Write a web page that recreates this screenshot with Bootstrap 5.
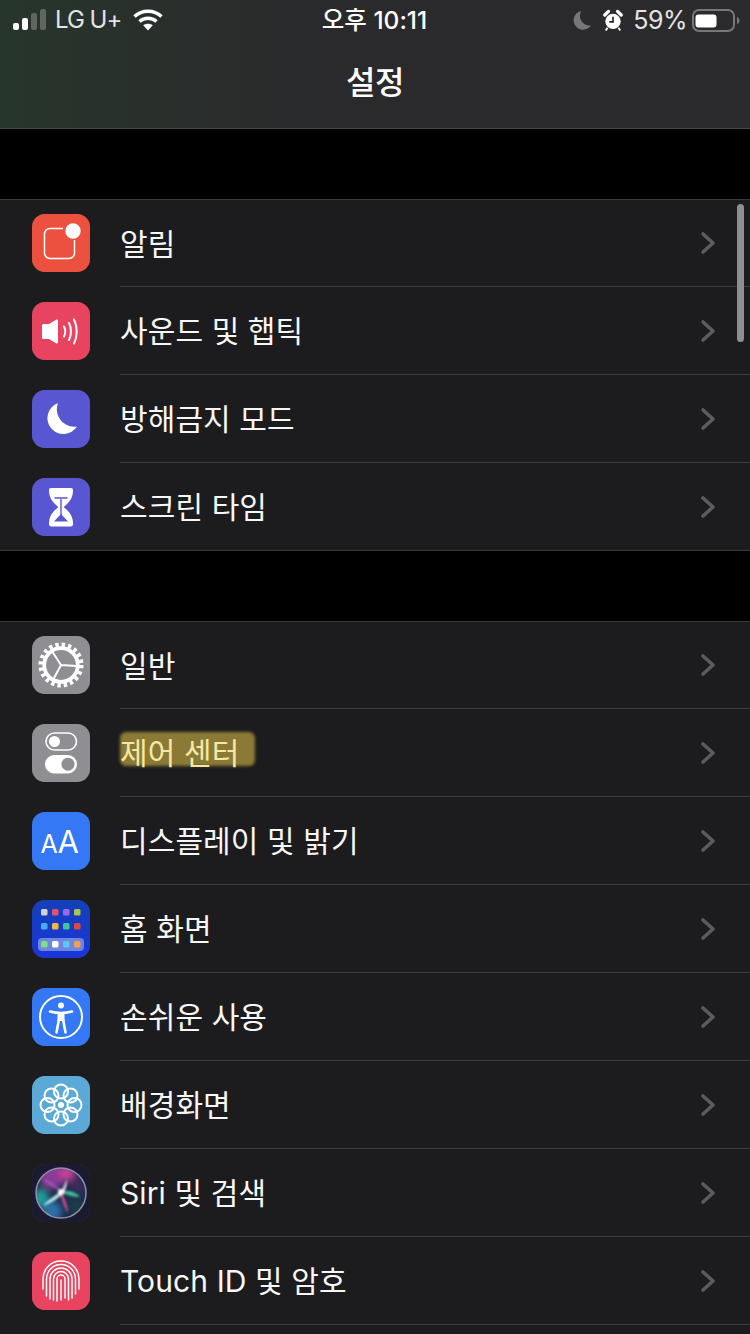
<!DOCTYPE html>
<html lang="ko">

<head>
    <meta charset="UTF-8">
    <meta name="viewport" content="width=device-width, initial-scale=1.0">
    <title>설정</title>
    <link href="https://cdn.jsdelivr.net/npm/bootstrap@5.3.2/dist/css/bootstrap.min.css" rel="stylesheet">
    <style>
        html, body { height: 1334px; overflow: hidden; background: #000; }
        body { font-family: Inter, "Noto Sans CJK KR", sans-serif; color: #fff; }
        .screen { width: 750px; height: 1334px; overflow: hidden; }

        .top-bar { height: 129px; border-bottom: 1px solid #48484a; background: linear-gradient(90deg, #26352b 0, #2a2e2c 25%, #2a2a2c 45%, #2b2b2d 100%); }
        .status-row { height: 40px; font-size: 25px; line-height: 40px; padding: 0 10px 0 13px; }
        .status-left { width: 296px; }
        .status-right { width: 300px; }
        .status-time { font-weight: 500; font-size: 24.5px; }
        .status-dim { color: #e4e4e6; letter-spacing: -.2px; }
        .carrier { font-size: 24px; letter-spacing: -1px; margin-left: 9px; margin-right: 12px; }
        .battery-pct { letter-spacing: -.5px; margin-left: 10px; margin-right: 5px; }
        .alarm-ico { margin-left: 12px; }
        .bars { height: 21px; width: 33px; margin-top: -1px; }
        .page-title { font-size: 32px; font-weight: 500; line-height: 44px; margin-top: 21px; letter-spacing: -0.5px; }

        .gap-band { height: 70px; background: #000; }
        .setting-group { background: #1c1c1e; border-top: 1px solid #3a3a3c; border-bottom: 1px solid #3a3a3c; }
        .setting-group.open-end { border-bottom: 0; }
        .setting-row { height: 88px; padding-left: 32px; }
        .setting-row:first-child { height: 87px; }
        .setting-row:first-child .app-icon { margin-bottom: 1px; }
        .app-icon { width: 58px; height: 58px; border-radius: 13px; overflow: hidden; box-shadow: inset 0 0 0 1px rgba(255, 255, 255, .18); flex: none; display: block; }
        .row-body { height: 100%; margin-left: 30px; padding-right: 34px; border-bottom: 1px solid #3a3a3c; font-size: 30px; color: #f7f7f8; }
        .setting-row.end-row { height: 87px; }
        .setting-row.end-row .app-icon { margin-top: 1px; }
        .setting-row.end-row .row-body { border-bottom: 0; }
        .row-label { position: relative; top: 1px; letter-spacing: .1px; }
        .row-tail { height: 9px; background: #1c1c1e; }

        .brush { position: relative; color: #f6e8a2; z-index: 0; }
        .brush::before { content: ""; position: absolute; z-index: -1; left: 0; top: 1px; width: 135px; height: 34px; background: #8a7a35; border-radius: 6px; filter: blur(1.5px); }

        .scroll-thumb { position: absolute; left: 737px; top: 204px; width: 7px; height: 138px; border-radius: 4px; background: #8e8e90; }
    </style>
</head>

<body>
    <main class="screen position-relative">
        <header class="top-bar">
            <div class="status-row d-flex align-items-center justify-content-between">
                <div class="status-left d-flex align-items-center">
                    <svg class="bars" viewBox="0 0 33 21">
                        <rect x="0" y="14" width="6" height="7" rx="2" fill="#fff"/>
                        <rect x="9" y="9" width="6" height="12" rx="2" fill="#fff"/>
                        <rect x="18" y="4" width="6" height="17" rx="2" fill="#5f6660"/>
                        <rect x="27" y="0" width="6" height="21" rx="2" fill="#5f6660"/>
                    </svg>
                    <span class="status-dim carrier">LG U+</span>
                    <svg width="30" height="22" viewBox="0 0 30 22" fill="none" stroke="#fff" stroke-width="3.400">
                        <path d="M1.500 7.500C9 .5 21 .5 28.500 7.500"/>
                        <path d="M6.500 12.500c4.800-4.300 12.200-4.300 17 0"/>
                        <path d="M15 21.500l-4.800-5.200c2.800-2 6.800-2 9.600 0z" fill="#fff" stroke="none"/>
                    </svg>
                </div>
                <div class="status-time">오후 10:11</div>
                <div class="status-right d-flex align-items-center justify-content-end">
                    <svg width="18" height="20" viewBox="0 0 20 22"><path d="M9 1A10.500 10.500 0 1 0 20 17 A11 11 0 0 1 9 1z" fill="#77777a"/></svg>
                    <svg class="alarm-ico" width="20" height="22" viewBox="0 0 22 24">
                        <circle cx="11" cy="13.500" r="8.500" fill="#fff"/>
                        <path d="M11 8.500v5.500H7" stroke="#222" stroke-width="1.800" fill="none"/>
                        <path d="M2 6.500l4-4M20 6.500l-4-4" stroke="#fff" stroke-width="3.600" stroke-linecap="round"/>
                        <path d="M5 20.500l-2 3M17 20.500l2 3" stroke="#fff" stroke-width="2"/>
                    </svg>
                    <span class="status-dim battery-pct">59%</span>
                    <svg width="48" height="23" viewBox="0 0 48 23">
                        <rect x="1" y="1" width="41" height="21" rx="6" fill="none" stroke="#77777a" stroke-width="2"/>
                        <rect x="3.500" y="5.500" width="21" height="13" rx="3" fill="#fff"/>
                        <path d="M45 8c1.500.5 2.500 2 2.500 3.500s-1 3-2.500 3.500z" fill="#77777a"/>
                    </svg>
                </div>
            </div>
            <div class="page-title text-center">설정</div>
        </header>

        <div class="gap-band"></div>

        <section class="setting-group">
            <div class="setting-row d-flex align-items-center">
                <svg class="app-icon" viewBox="0 0 58 58" fill="none">
                    <rect width="58" height="58" fill="#ec513f"/>
                    <path d="M31 14.500H18a5.500 5.500 0 0 0-5.500 5.500v19a5.500 5.500 0 0 0 5.500 5.500h19a5.500 5.500 0 0 0 5.500-5.500V26" stroke="#fff" stroke-width="1.500"/>
                    <circle cx="41" cy="17" r="7.700" fill="#fff"/>
                </svg>
                <div class="row-body flex-grow-1 d-flex align-items-center justify-content-between">
                    <span class="row-label">알림</span>
                    <svg width="16" height="24" viewBox="0 0 16 24" fill="none"><path d="M3 3l10 9-10 9" stroke="#5c5c5f" stroke-width="3.600" stroke-linecap="round" stroke-linejoin="round"/></svg>
                </div>
            </div>
            <div class="setting-row d-flex align-items-center">
                <svg class="app-icon" viewBox="0 0 58 58" fill="none">
                    <rect width="58" height="58" fill="#e9445f"/>
                    <path d="M10 23.500a1.500 1.500 0 0 1 1.500-1.500H17l7-4.300c1-.6 2-.1 2 1.100v21.400c0 1.200-1 1.700-2 1.100L17 37h-5.500a1.500 1.500 0 0 1-1.500-1.500z" fill="#fff"/>
                    <path d="M32 24.500c1.500 3 1.500 7 0 10M37 21c2.600 5 2.600 12 0 17M42 17.500c3.600 7 3.600 17 0 24" stroke="#fff" stroke-width="2" stroke-linecap="round"/>
                </svg>
                <div class="row-body flex-grow-1 d-flex align-items-center justify-content-between">
                    <span class="row-label">사운드 및 햅틱</span>
                    <svg width="16" height="24" viewBox="0 0 16 24" fill="none"><path d="M3 3l10 9-10 9" stroke="#5c5c5f" stroke-width="3.600" stroke-linecap="round" stroke-linejoin="round"/></svg>
                </div>
            </div>
            <div class="setting-row d-flex align-items-center">
                <svg class="app-icon" viewBox="0 0 58 58">
                    <rect width="58" height="58" fill="#5856d0"/>
                    <path d="M26 13A16 16 0 1 0 45 36.500A17.500 17.500 0 0 1 26 13z" fill="#fff"/>
                </svg>
                <div class="row-body flex-grow-1 d-flex align-items-center justify-content-between">
                    <span class="row-label">방해금지 모드</span>
                    <svg width="16" height="24" viewBox="0 0 16 24" fill="none"><path d="M3 3l10 9-10 9" stroke="#5c5c5f" stroke-width="3.600" stroke-linecap="round" stroke-linejoin="round"/></svg>
                </div>
            </div>
            <div class="setting-row end-row d-flex align-items-center">
                <svg class="app-icon" viewBox="0 0 58 58">
                    <rect width="58" height="58" fill="#5856d0"/>
                    <path d="M19 10h20a2 2 0 0 1 2 2c0 6-2 10-6 14-2 2-3 2-3 3s1 1 3 3c4 4 6 8 6 14a2.500 2.500 0 0 1-2.500 2.500h-19A2.500 2.500 0 0 1 17 46c0-6 2-10 6-14 2-2 3-2 3-3s-1-1-3-3c-4-4-6-8-6-14a2 2 0 0 1 2-2z" fill="#fff"/>
                    <path d="M22.500 20h13M29 21v17" stroke="#5856d0" stroke-width="1.400"/>
                    <path d="M29 36l-7 7.500h14z" fill="#5856d0"/>
                </svg>
                <div class="row-body flex-grow-1 d-flex align-items-center justify-content-between">
                    <span class="row-label">스크린 타임</span>
                    <svg width="16" height="24" viewBox="0 0 16 24" fill="none"><path d="M3 3l10 9-10 9" stroke="#5c5c5f" stroke-width="3.600" stroke-linecap="round" stroke-linejoin="round"/></svg>
                </div>
            </div>
        </section>

        <div class="gap-band"></div>

        <section class="setting-group open-end">
            <div class="setting-row d-flex align-items-center">
                <svg class="app-icon" viewBox="0 0 58 58" fill="none">
                    <rect width="58" height="58" fill="#8e8e93"/>
                    <circle cx="29" cy="29" r="20.200" stroke="#fff" stroke-width="4.600" stroke-dasharray="3.350 3"/>
                    <circle cx="29" cy="29" r="16.800" stroke="#fff" stroke-width="3.800"/>
                    <path d="M29 29L45 30M29 29l-8.500-13M29 29l-7.500 14" stroke="#fff" stroke-width="2"/>
                </svg>
                <div class="row-body flex-grow-1 d-flex align-items-center justify-content-between">
                    <span class="row-label">일반</span>
                    <svg width="16" height="24" viewBox="0 0 16 24" fill="none"><path d="M3 3l10 9-10 9" stroke="#5c5c5f" stroke-width="3.600" stroke-linecap="round" stroke-linejoin="round"/></svg>
                </div>
            </div>
            <div class="setting-row d-flex align-items-center">
                <svg class="app-icon" viewBox="0 0 58 58">
                    <rect width="58" height="58" fill="#8e8e93"/>
                    <rect x="14" y="9" width="30.500" height="17" rx="8.500" fill="none" stroke="#fff" stroke-width="1.600"/>
                    <circle cx="22.500" cy="17.500" r="5.500" fill="#fff"/>
                    <rect x="13" y="31" width="32" height="18.500" rx="9.250" fill="#fff"/>
                    <circle cx="36" cy="40.200" r="6.500" fill="#8e8e93"/>
                </svg>
                <div class="row-body flex-grow-1 d-flex align-items-center justify-content-between">
                    <span class="row-label brush">제어 센터</span>
                    <svg width="16" height="24" viewBox="0 0 16 24" fill="none"><path d="M3 3l10 9-10 9" stroke="#5c5c5f" stroke-width="3.600" stroke-linecap="round" stroke-linejoin="round"/></svg>
                </div>
            </div>
            <div class="setting-row d-flex align-items-center">
                <svg class="app-icon" viewBox="0 0 58 58" fill="#fff" font-family="Inter, sans-serif" font-weight="400">
                    <rect width="58" height="58" fill="#3478f6"/>
                    <text x="8.500" y="40.500" font-size="25">A</text>
                    <text x="25.500" y="40.500" font-size="31">A</text>
                </svg>
                <div class="row-body flex-grow-1 d-flex align-items-center justify-content-between">
                    <span class="row-label">디스플레이 및 밝기</span>
                    <svg width="16" height="24" viewBox="0 0 16 24" fill="none"><path d="M3 3l10 9-10 9" stroke="#5c5c5f" stroke-width="3.600" stroke-linecap="round" stroke-linejoin="round"/></svg>
                </div>
            </div>
            <div class="setting-row d-flex align-items-center">
                <svg class="app-icon" viewBox="0 0 58 58">
                    <defs><linearGradient id="homeBg" x1="0" y1="0" x2="0" y2="1"><stop offset="0" stop-color="#1340b8"/><stop offset="1" stop-color="#1a36d8"/></linearGradient></defs>
                    <rect width="58" height="58" fill="url(#homeBg)"/>
                    <rect x="9" y="9" width="6.500" height="6.500" rx="1.500" fill="#d2d2d2"/>
                    <rect x="20" y="9" width="6.500" height="6.500" rx="1.500" fill="#e8506a"/>
                    <rect x="31" y="9" width="6.500" height="6.500" rx="1.500" fill="#a066f0"/>
                    <rect x="42" y="9" width="6.500" height="6.500" rx="1.500" fill="#a8c84a"/>
                    <rect x="9" y="23" width="6.500" height="6.500" rx="1.500" fill="#45aef5"/>
                    <rect x="20" y="23" width="6.500" height="6.500" rx="1.500" fill="#f2b93b"/>
                    <rect x="31" y="23" width="6.500" height="6.500" rx="1.500" fill="#3cc89a"/>
                    <rect x="42" y="23" width="6.500" height="6.500" rx="1.500" fill="#e2483c"/>
                    <rect x="6" y="38" width="46" height="13" rx="4" fill="#6f86e0"/>
                    <rect x="9" y="41" width="6.500" height="6.500" rx="1.500" fill="#7ee081"/>
                    <rect x="20" y="41" width="6.500" height="6.500" rx="1.500" fill="#fff"/>
                    <rect x="31" y="41" width="6.500" height="6.500" rx="1.500" fill="#5cc8fa"/>
                    <rect x="42" y="41" width="6.500" height="6.500" rx="1.500" fill="#f0a050"/>
                </svg>
                <div class="row-body flex-grow-1 d-flex align-items-center justify-content-between">
                    <span class="row-label">홈 화면</span>
                    <svg width="16" height="24" viewBox="0 0 16 24" fill="none"><path d="M3 3l10 9-10 9" stroke="#5c5c5f" stroke-width="3.600" stroke-linecap="round" stroke-linejoin="round"/></svg>
                </div>
            </div>
            <div class="setting-row d-flex align-items-center">
                <svg class="app-icon" viewBox="0 0 58 58" fill="none">
                    <rect width="58" height="58" fill="#3478f6"/>
                    <circle cx="29" cy="29" r="21" stroke="#fff" stroke-width="2"/>
                    <circle cx="29" cy="17.500" r="3" fill="#fff"/>
                    <path d="M18 23.500c4 1 7.500 1.500 11 1.500s7-.5 11-1.500" stroke="#fff" stroke-width="2.600" stroke-linecap="round"/>
                    <path d="M25.500 24.500h7V33h-7z" fill="#fff"/>
                    <path d="M26.800 32L24.500 44.500M31.200 32L33.500 44.500" stroke="#fff" stroke-width="2.600" stroke-linecap="round"/>
                </svg>
                <div class="row-body flex-grow-1 d-flex align-items-center justify-content-between">
                    <span class="row-label">손쉬운 사용</span>
                    <svg width="16" height="24" viewBox="0 0 16 24" fill="none"><path d="M3 3l10 9-10 9" stroke="#5c5c5f" stroke-width="3.600" stroke-linecap="round" stroke-linejoin="round"/></svg>
                </div>
            </div>
            <div class="setting-row d-flex align-items-center">
                <svg class="app-icon" viewBox="0 0 58 58" fill="none" stroke="#fff" stroke-width="2">
                    <rect width="58" height="58" fill="#5aa9d6" stroke="none"/>
                    <circle cx="29" cy="15.500" r="7"/>
                    <circle cx="29" cy="42.500" r="7"/>
                    <circle cx="15.500" cy="29" r="7"/>
                    <circle cx="42.500" cy="29" r="7"/>
                    <circle cx="19.500" cy="19.500" r="7"/>
                    <circle cx="38.500" cy="19.500" r="7"/>
                    <circle cx="19.500" cy="38.500" r="7"/>
                    <circle cx="38.500" cy="38.500" r="7"/>
                    <circle cx="29" cy="29" r="3" fill="#fff" stroke="none"/>
                </svg>
                <div class="row-body flex-grow-1 d-flex align-items-center justify-content-between">
                    <span class="row-label">배경화면</span>
                    <svg width="16" height="24" viewBox="0 0 16 24" fill="none"><path d="M3 3l10 9-10 9" stroke="#5c5c5f" stroke-width="3.600" stroke-linecap="round" stroke-linejoin="round"/></svg>
                </div>
            </div>
            <div class="setting-row d-flex align-items-center">
                <svg class="app-icon" viewBox="0 0 58 58" fill="none">
                    <defs>
                        <filter id="siriSoft"><feGaussianBlur stdDeviation="3"/></filter>
                        <filter id="siriFine" x="-30%" y="-30%" width="160%" height="160%"><feGaussianBlur stdDeviation="1"/></filter>
                        <clipPath id="siriClip"><circle cx="29" cy="29" r="25"/></clipPath>
                    </defs>
                    <rect width="58" height="58" fill="#1a1a30"/>
                    <circle cx="29" cy="29" r="25" fill="#1b2c4a"/>
                    <g clip-path="url(#siriClip)">
                        <g filter="url(#siriSoft)">
                            <circle cx="20" cy="12" r="13" fill="#8a3a96"/>
                            <circle cx="35" cy="9" r="8" fill="#c2429a"/>
                            <circle cx="8" cy="34" r="9" fill="#1c9c9c"/>
                            <circle cx="20" cy="47" r="10" fill="#2d6ea8"/>
                            <circle cx="46" cy="22" r="8" fill="#3a2a5c"/>
                            <circle cx="44" cy="42" r="9" fill="#1c3a4c"/>
                        </g>
                        <g filter="url(#siriFine)">
                            <path d="M29 27C21 17 14 15 11 17c5 3 11 7 18 10z" fill="#a45bc0" opacity=".7"/>
                            <path d="M28 30c2 7 5 15 8 19 0-7-3-14-6-20z" fill="#de4a94" opacity=".9"/>
                            <path d="M29 28c7-2 14-1 19 5-7 0-14-2-19-5z" fill="#3fd2a5" opacity=".85"/>
                            <path d="M30 27C23 31 15 37 11 42c8-3 15-7 20-13z" fill="#c8f4f2" opacity=".9"/>
                            <path d="M29 28L35 15c0 5-1 10-3 14z" fill="#f2e6f6" opacity=".9"/>
                            <circle cx="29" cy="28" r="3" fill="#fff"/>
                        </g>
                    </g>
                    <circle cx="29" cy="29" r="25" stroke="#8f92a6" stroke-width="1.500"/>
                </svg>
                <div class="row-body flex-grow-1 d-flex align-items-center justify-content-between">
                    <span class="row-label">Siri 및 검색</span>
                    <svg width="16" height="24" viewBox="0 0 16 24" fill="none"><path d="M3 3l10 9-10 9" stroke="#5c5c5f" stroke-width="3.600" stroke-linecap="round" stroke-linejoin="round"/></svg>
                </div>
            </div>
            <div class="setting-row d-flex align-items-center">
                <svg class="app-icon" viewBox="0 0 58 58" fill="none" stroke="#fff" stroke-width="1.500" stroke-linecap="round">
                    <rect width="58" height="58" fill="#e9445f" stroke="none"/>
                    <path d="M11 37V27A18 18 0 0 1 47 27V37"/>
                    <path d="M14.500 44V27A14.500 14.500 0 0 1 43.500 27V42"/>
                    <path d="M18 47V27A11 11 0 0 1 40 27V46"/>
                    <path d="M21.500 48V27A7.500 7.500 0 0 1 36.500 27V48"/>
                    <path d="M25 49V27A4 4 0 0 1 33 27V46"/>
                    <path d="M29 28V48"/>
                </svg>
                <div class="row-body flex-grow-1 d-flex align-items-center justify-content-between">
                    <span class="row-label">Touch ID 및 암호</span>
                    <svg width="16" height="24" viewBox="0 0 16 24" fill="none"><path d="M3 3l10 9-10 9" stroke="#5c5c5f" stroke-width="3.600" stroke-linecap="round" stroke-linejoin="round"/></svg>
                </div>
            </div>
            <div class="row-tail"></div>
        </section>

        <div class="scroll-thumb"></div>
    </main>

    <script src="https://cdn.jsdelivr.net/npm/bootstrap@5.3.2/dist/js/bootstrap.bundle.min.js"></script>
</body>

</html>
